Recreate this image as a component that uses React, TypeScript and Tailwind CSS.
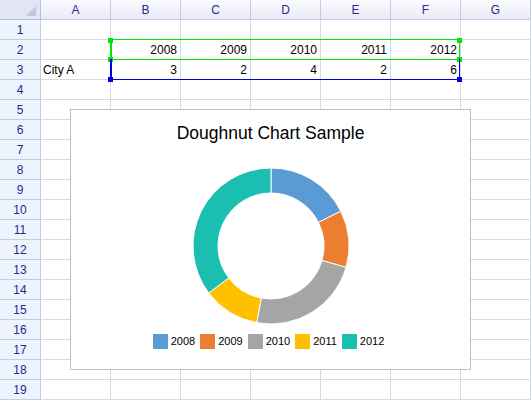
const cols = ["A", "B", "C", "D", "E", "F", "G"]

const cells: Record<number, string[]> = {
  2: ["", "2008", "2009", "2010", "2011", "2012", ""],
  3: ["City A", "3", "2", "4", "2", "6", ""],
}

const series = [
  { year: "2008", value: 3, color: "#5b9bd5" },
  { year: "2009", value: 2, color: "#ed7d31" },
  { year: "2010", value: 4, color: "#a5a5a5" },
  { year: "2011", value: 2, color: "#ffc000" },
  { year: "2012", value: 6, color: "#1bbfb1" },
]

// angles in degrees, 0 = 12 o'clock, going clockwise
function point(cx: number, cy: number, rad: number, deg: number) {
  const a = (deg * Math.PI) / 180
  return `${(cx + rad * Math.sin(a)).toFixed(2)} ${(cy - rad * Math.cos(a)).toFixed(2)}`
}

function slice(a0: number, a1: number, R: number, r: number, cx: number, cy: number) {
  const large = a1 - a0 > 180 ? 1 : 0
  return [
    `M ${point(cx, cy, R, a0)}`,
    `A ${R} ${R} 0 ${large} 1 ${point(cx, cy, R, a1)}`,
    `L ${point(cx, cy, r, a1)}`,
    `A ${r} ${r} 0 ${large} 0 ${point(cx, cy, r, a0)}`,
    "Z",
  ].join(" ")
}

function Doughnut() {
  const total = series.reduce((s, d) => s + d.value, 0)
  let start = 0
  return (
    <svg width="160" height="160" viewBox="0 0 160 160">
      {series.map((d) => {
        const end = start + (d.value / total) * 360
        const path = slice(start, end, 78, 53, 80, 80)
        start = end
        return <path key={d.year} d={path} fill={d.color} stroke="#ffffff" strokeWidth="1" />
      })}
    </svg>
  )
}

function Chart() {
  return (
    <div className="absolute left-[70px] top-[109px] w-[401px] h-[261px] border border-[#bfbfbf] bg-white flex flex-col items-center">
      <p className="mt-[13px] text-[17.5px] leading-[21px] text-black">Doughnut Chart Sample</p>
      <div className="mt-[22px]">
        <Doughnut />
      </div>
      <div className="mt-[8px] -ml-[4px] flex items-center gap-[5px] text-[11px] leading-[15px] text-black">
        {series.map((d) => (
          <div key={d.year} className="flex items-center gap-[3px]">
            <span className="w-[15px] h-[15px]" style={{ backgroundColor: d.color }} />
            <span>{d.year}</span>
          </div>
        ))}
      </div>
    </div>
  )
}

function Handle({ blue, right, bottom }: { blue?: boolean; right?: boolean; bottom?: boolean }) {
  return (
    <span
      className={[
        "absolute w-[5px] h-[5px]",
        blue ? "bg-[#0000e6]" : "bg-[#00e600]",
        right ? "-right-[3px]" : "-left-[4px]",
        bottom ? "-bottom-[3px]" : "-top-[2px]",
      ].join(" ")}
    />
  )
}

// selected ranges drawn over the grid
function Selection() {
  return (
    <>
      <div className="absolute left-[110px] top-[39px] w-[350px] h-[21px] border border-l-2 border-[#00e600]">
        <Handle />
        <Handle right />
        <Handle bottom />
        <Handle right bottom />
      </div>
      <div className="absolute left-[110px] top-[59px] w-[350px] h-[21px] border border-t-0 border-l-2 border-[#0000e6]">
        <Handle blue bottom />
        <Handle blue right bottom />
      </div>
    </>
  )
}

export default function App() {
  const rows = Array.from({ length: 19 }, (_, i) => i + 1)

  return (
    <div className="relative w-[531px] h-[400px] overflow-hidden bg-white font-['Liberation_Sans',Arial,sans-serif] text-[12px]">
      <div className="grid grid-cols-[41px_repeat(7,70px)]">
        <div className="h-[20px] border-r border-b border-[#b4c3dc] bg-[#e3e5f5] flex items-end justify-end pr-[4px] pb-[3px]">
          <svg width="10" height="10" viewBox="0 0 10 10">
            <path d="M10 0 L10 10 L0 10 Z" fill="#c3c6d6" />
          </svg>
        </div>
        {cols.map((c) => (
          <div key={c} className="h-[20px] border-r border-b border-[#c3cde2] bg-linear-to-b from-[#fbfbff] to-[#e9eaf7] flex items-center justify-center text-[#2b2a8e]">
            {c}
          </div>
        ))}

        {rows.map((r) => (
          <div key={r} className="contents">
            <div className="h-[20px] border-r border-b border-[#c1cee4] bg-[#edf4fe] flex items-center justify-center text-[#1f2a8a]">
              {r}
            </div>
            {cols.map((c, i) => {
              const v = cells[r]?.[i] ?? ""
              const left = i === 0
              return (
                <div
                  key={c}
                  className={
                    left
                      ? "h-[20px] border-r border-b border-[#d4dbe8] flex items-center pl-[2px] text-black"
                      : "h-[20px] border-r border-b border-[#d4dbe8] flex items-center justify-end pr-[3px] text-black"
                  }
                >
                  {v}
                </div>
              )
            })}
          </div>
        ))}
      </div>

      <Selection />
      <Chart />
    </div>
  )
}
